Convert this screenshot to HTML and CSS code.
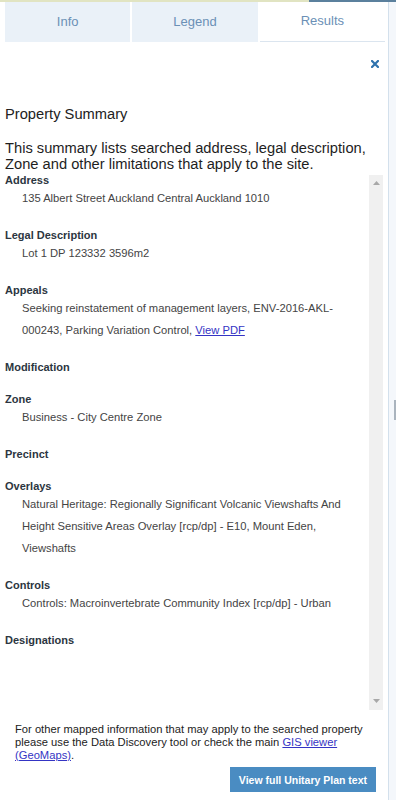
FILE: index.html
```html
<!DOCTYPE html>
<html lang="en">
<head>
<meta charset="utf-8">
<title>Property Summary</title>
<link rel="stylesheet" href="styles.css">
</head>
<body>
<div class="topstrip"><span class="ts-a"></span><span class="ts-b"></span></div>
<div class="layout">
  <div class="panel">
    <div class="tabs">
      <div class="tab">Info</div>
      <div class="tab">Legend</div>
      <div class="tab active">Results</div>
    </div>
    <div class="closebar">
      <svg class="close" width="8" height="8" viewBox="0 0 8 8"><path d="M1 1L7 7M7 1L1 7" stroke="#2f72ad" stroke-width="2.2" stroke-linecap="square"/></svg>
    </div>
    <div class="title">Property Summary</div>
    <div class="intro">This summary lists searched address, legal description, Zone and other limitations that apply to the site.</div>
    <div class="scrollbox">
      <div class="content">
        <div class="section">
          <div class="label">Address</div>
          <div class="value">135 Albert Street Auckland Central Auckland 1010</div>
        </div>
        <div class="section">
          <div class="label">Legal Description</div>
          <div class="value">Lot 1 DP 123332 3596m2</div>
        </div>
        <div class="section">
          <div class="label">Appeals</div>
          <div class="value">Seeking reinstatement of management layers, ENV-2016-AKL-000243, Parking Variation Control, <a href="#" class="link">View PDF</a></div>
        </div>
        <div class="section">
          <div class="label">Modification</div>
        </div>
        <div class="section">
          <div class="label">Zone</div>
          <div class="value">Business - City Centre Zone</div>
        </div>
        <div class="section">
          <div class="label">Precinct</div>
        </div>
        <div class="section">
          <div class="label">Overlays</div>
          <div class="value">Natural Heritage: Regionally Significant Volcanic Viewshafts And Height Sensitive Areas Overlay [rcp/dp] - E10, Mount Eden, Viewshafts</div>
        </div>
        <div class="section">
          <div class="label">Controls</div>
          <div class="value">Controls: Macroinvertebrate Community Index [rcp/dp] - Urban</div>
        </div>
        <div class="section">
          <div class="label">Designations</div>
        </div>
      </div>
      <div class="scrollbar">
        <svg width="7" height="4" viewBox="0 0 7 4"><path d="M0 4L3.5 0L7 4Z" fill="#a8a8a8"/></svg>
        <svg width="7" height="4" viewBox="0 0 7 4"><path d="M0 0L3.5 4L7 0Z" fill="#a8a8a8"/></svg>
      </div>
    </div>
    <div class="footer">For other mapped information that may apply to the searched property please use the Data Discovery tool or check the main <a href="#" class="link">GIS viewer (GeoMaps)</a>.</div>
    <div class="actions">
      <button class="btn">View full Unitary Plan text</button>
    </div>
  </div>
  <div class="gutter"><span class="grip"></span></div>
</div>
</body>
</html>
```
FILE: styles.css
```css
* { box-sizing: border-box; }
html, body { margin: 0; padding: 0; }
body {
  width: 396px;
  height: 800px;
  overflow: hidden;
  background: #f4f7fb;
  font-family: "Liberation Sans", Arial, sans-serif;
  color: #222;
}
.topstrip { display: flex; height: 2px; }
.ts-a { width: 309px; background: #e1e4c2; }
.ts-b { flex: 1; background: #5b809d; }
.layout { display: flex; height: 798px; }
.panel {
  width: 389px;
  background: #fff;
  border-right: 1px solid #d3e0ec;
  display: flex;
  flex-direction: column;
}
.gutter { flex: 1; display: flex; flex-direction: column; }
.grip { display: block; width: 2px; height: 20px; margin: 398px 0 0 5px; background: #aab4be; }
.tabs { display: flex; gap: 2px; height: 40px; margin: 0 3px 0 5px; }
.tab {
  flex: 1;
  background: #eaf1f8;
  color: #6b90b6;
  font-size: 13px;
  display: flex;
  align-items: center;
  justify-content: center;
  padding-bottom: 2px;
}
.tab.active { background: #fff; border-bottom: 1px solid #dbe5ef; }
.closebar { display: flex; justify-content: flex-end; padding: 18px 9px 0 0; height: 26px; }
.close { display: block; }
.title { margin-top: 38px; padding-left: 5px; font-size: 14.7px; line-height: 16px; color: #222; }
.intro { margin-top: 18px; padding: 0 3px 0 5px; font-size: 14.7px; line-height: 16px; color: #1e1e1e; }
.scrollbox { display: flex; height: 538px; }
.content { flex: 1; padding-left: 5px; }
.section { margin-bottom: 16px; }
.label { font-size: 11px; font-weight: bold; line-height: 16px; color: #2c3641; }
.value {
  margin-top: -1px;
  padding: 0 0 2px 17px;
  font-size: 11.2px;
  line-height: 22px;
  color: #444;
}
.link { color: #3434c4; text-decoration: underline; }
.scrollbar {
  width: 14px;
  margin: 3px 5px 0 0;
  background: #f0f0f0;
  display: flex;
  flex-direction: column;
  justify-content: space-between;
  align-items: center;
  padding: 6px 0 7px;
}
.scrollbar svg { display: block; }
.footer {
  margin-top: 13px;
  padding: 0 12px 0 15px;
  font-size: 11.2px;
  line-height: 13px;
  color: #222;
}
.actions { display: flex; justify-content: flex-end; padding-right: 12px; margin-top: 5px; }
.btn {
  height: 25px;
  padding: 0 9px;
  border: none;
  background: #4a8cc2;
  color: #fff;
  font-family: "Liberation Sans", Arial, sans-serif;
  font-size: 10.5px;
  font-weight: bold;
}
```
